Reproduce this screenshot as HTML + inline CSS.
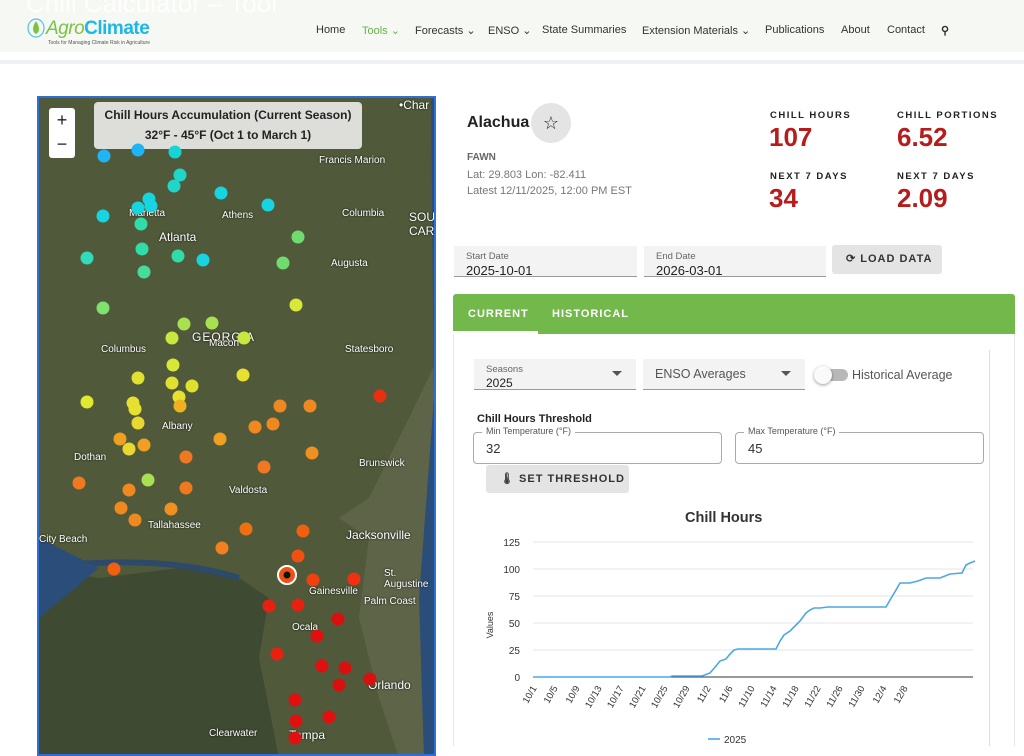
<!DOCTYPE html>
<html><head><meta charset="utf-8">
<style>
*{box-sizing:border-box;margin:0;padding:0}
body{width:1024px;height:746px;overflow:hidden;background:#fff;font-family:"Liberation Sans",sans-serif;color:#333;position:relative}
.hdr{position:absolute;left:0;top:0;width:1024px;height:52px;background:#f6f8f3}
.ghost{position:absolute;left:26px;top:-12px;font-size:26px;color:#fff;opacity:.9}
.nav{position:absolute;top:24px;font-size:11px;color:#333}
.sep{position:absolute;top:60px;left:0;width:1024px;height:4px;background:#f0f1f3}
.map{position:absolute;left:37px;top:96px;width:399px;height:660px;background:#4a5236;border:2px solid #2f6fd6;overflow:hidden}
.dot{position:absolute;width:13px;height:13px;border-radius:50%}
.lbl{position:absolute;color:#fff;font-size:10px;text-shadow:0 0 2px #000}
.red{color:#b71c1c;font-weight:bold;font-size:26px;position:absolute}
.cap{position:absolute;font-size:9.5px;letter-spacing:1.5px;font-weight:bold;color:#222}
.fld{position:absolute;background:#f3f3f3;border-bottom:1px solid #999}
.fld .s{position:absolute;left:12px;top:5px;font-size:9.5px;color:#666}
.fld .v{position:absolute;left:12px;top:17px;font-size:13px;color:#222}
.btn{position:absolute;background:#e4e4e4;border-radius:3px;font-size:11px;font-weight:bold;letter-spacing:1px;color:#333}
</style></head><body>
<div class="hdr"></div>
<div class="ghost">Chill Calculator – Tool</div>
<svg style="position:absolute;left:27px;top:17px" width="18" height="22"><ellipse cx="9" cy="11" rx="8" ry="9" fill="none" stroke="#4fc3e8" stroke-width="1.2"/><path d="M9 4 C5 10 5 15 9 17 C13 15 13 10 9 4Z" fill="#7cc242"/></svg>
<div style="position:absolute;left:46px;top:18px;font-size:19px;font-style:italic;color:#7cc242;letter-spacing:-0.5px">Agro<span style="color:#1fb7e6;font-style:normal;font-weight:bold">Climate</span></div>
<div style="position:absolute;left:48px;top:40px;font-size:5px;color:#555">Tools for Managing Climate Risk in Agriculture</div>
<div class="nav" style="left:316px">Home</div>
<div class="nav" style="left:362px;color:#6ab04c">Tools ⌄</div>
<div class="nav" style="left:415px">Forecasts ⌄</div>
<div class="nav" style="left:488px">ENSO ⌄</div>
<div class="nav" style="left:542px">State Summaries</div>
<div class="nav" style="left:642px">Extension Materials ⌄</div>
<div class="nav" style="left:765px">Publications</div>
<div class="nav" style="left:841px">About</div>
<div class="nav" style="left:887px">Contact</div>
<div class="nav" style="left:941px;font-weight:bold">⚲</div>
<div class="sep"></div>

<div class="map">
<svg width="399" height="660" style="position:absolute;left:0;top:0">
<rect width="399" height="660" fill="#505a3a"/>
<path d="M300 420 L330 440 L320 520 L340 600 L360 660 L399 660 L399 260 L370 320 L330 400Z" fill="#5e6448"/>
<path d="M0 470 L60 480 L140 470 L200 480 L230 500 L220 560 L240 660 L0 660Z" fill="#3f4a33"/>
<path d="M0 470 Q120 455 200 480" stroke="#2d4a6a" stroke-width="6" fill="none"/>
<path d="M392 0 L399 0 L399 660 L385 660 L380 500 L395 300Z" fill="#2b4d7a"/>
<path d="M0 440 L60 470 L0 520Z" fill="#2b4d7a"/>
</svg>
<div style="position:absolute;left:10px;top:10px;width:26px;height:50px;background:#fff;border-radius:3px;font-size:18px;text-align:center;line-height:24px;color:#222">+<br>−</div>
<div style="position:absolute;left:55px;top:4px;width:268px;height:47px;background:rgba(240,240,240,.88);border-radius:4px;text-align:center;font-size:12px;font-weight:bold;color:#222;line-height:20px;padding-top:3px">Chill Hours Accumulation (Current Season)<br>32°F - 45°F (Oct 1 to March 1)</div>
<div class="lbl" style="left:120px;top:132px;font-size:12px">Atlanta</div>
<div class="lbl" style="left:90px;top:110px">Marietta</div>
<div class="lbl" style="left:183px;top:112px">Athens</div>
<div class="lbl" style="left:153px;top:232px;font-size:12px;letter-spacing:1px">GEORGIA</div>
<div class="lbl" style="left:62px;top:246px">Columbus</div>
<div class="lbl" style="left:170px;top:240px">Macon</div>
<div class="lbl" style="left:292px;top:160px">Augusta</div>
<div class="lbl" style="left:303px;top:110px">Columbia</div>
<div class="lbl" style="left:123px;top:323px">Albany</div>
<div class="lbl" style="left:35px;top:354px">Dothan</div>
<div class="lbl" style="left:190px;top:387px">Valdosta</div>
<div class="lbl" style="left:109px;top:422px">Tallahassee</div>
<div class="lbl" style="left:307px;top:430px;font-size:12px">Jacksonville</div>
<div class="lbl" style="left:270px;top:488px">Gainesville</div>
<div class="lbl" style="left:253px;top:524px">Ocala</div>
<div class="lbl" style="left:329px;top:580px;font-size:12px">Orlando</div>
<div class="lbl" style="left:170px;top:630px">Clearwater</div>
<div class="lbl" style="left:250px;top:630px;font-size:12px">Tampa</div>
<div class="lbl" style="left:306px;top:246px">Statesboro</div>
<div class="lbl" style="left:320px;top:360px">Brunswick</div>
<div class="lbl" style="left:280px;top:57px">Francis Marion</div>
<div class="lbl" style="left:360px;top:0px;font-size:12px">•Char</div>
<div class="lbl" style="left:370px;top:112px;font-size:12px">SOU<br>CARO</div>
<div class="lbl" style="left:0px;top:436px">City Beach</div>
<div class="lbl" style="left:325px;top:498px">Palm Coast</div>
<div class="lbl" style="left:345px;top:470px">St. Augustine</div>
</div>
<svg style="position:absolute;left:37px;top:96px" width="399" height="650">
<g>
<circle cx="67" cy="60" r="6.5" fill="#1eb4f5"/><circle cx="101" cy="54" r="6.5" fill="#1eb4f5"/><circle cx="138" cy="56" r="6.5" fill="#16d4d4"/>
<circle cx="143" cy="79" r="6.5" fill="#20d6c8"/><circle cx="137" cy="90" r="6.5" fill="#20d6c8"/><circle cx="112" cy="103" r="6.5" fill="#16d4e0"/><circle cx="114" cy="110" r="6.5" fill="#16d4e0"/><circle cx="101" cy="112" r="6.5" fill="#16d4e0"/>
<circle cx="66" cy="120" r="6.5" fill="#16d4e0"/><circle cx="184" cy="97" r="6.5" fill="#16d4e0"/><circle cx="231" cy="109" r="6.5" fill="#16d4e0"/>
<circle cx="104" cy="128" r="6.5" fill="#30dca8"/><circle cx="105" cy="153" r="6.5" fill="#30dca8"/><circle cx="50" cy="162" r="6.5" fill="#30dcb8"/><circle cx="107" cy="176" r="6.5" fill="#48dc9a"/><circle cx="141" cy="160" r="6.5" fill="#30dca8"/><circle cx="166" cy="164" r="6.5" fill="#16d4e0"/><circle cx="246" cy="167" r="6.5" fill="#70dc70"/><circle cx="261" cy="141" r="6.5" fill="#70dc70"/>
<circle cx="66" cy="212" r="6.5" fill="#80e070"/><circle cx="147" cy="228" r="6.5" fill="#a8e050"/><circle cx="175" cy="227" r="6.5" fill="#a8e050"/><circle cx="207" cy="242" r="6.5" fill="#c8e840"/><circle cx="259" cy="209" r="6.5" fill="#d8e838"/><circle cx="135" cy="242" r="6.5" fill="#c8e840"/>
<circle cx="136" cy="269" r="6.5" fill="#d8e838"/><circle cx="101" cy="282" r="6.5" fill="#e0e030"/><circle cx="135" cy="287" r="6.5" fill="#e0e030"/><circle cx="155" cy="290" r="6.5" fill="#e0e030"/><circle cx="206" cy="279" r="6.5" fill="#e8e030"/><circle cx="142" cy="301" r="6.5" fill="#e8e030"/><circle cx="96" cy="307" r="6.5" fill="#e8e030"/><circle cx="50" cy="306" r="6.5" fill="#e0e830"/><circle cx="98" cy="313" r="6.5" fill="#e8e030"/><circle cx="101" cy="327" r="6.5" fill="#e8d830"/><circle cx="143" cy="310" r="6.5" fill="#f0b020"/>
<circle cx="243" cy="310" r="6.5" fill="#f08820"/><circle cx="273" cy="310" r="6.5" fill="#f08820"/><circle cx="218" cy="331" r="6.5" fill="#f08820"/><circle cx="236" cy="328" r="6.5" fill="#f08820"/><circle cx="183" cy="343" r="6.5" fill="#f0a020"/><circle cx="83" cy="343" r="6.5" fill="#f0a020"/><circle cx="107" cy="349" r="6.5" fill="#f0a020"/><circle cx="92" cy="353" r="6.5" fill="#e8d830"/><circle cx="149" cy="361" r="6.5" fill="#f07820"/><circle cx="275" cy="357" r="6.5" fill="#f09020"/><circle cx="227" cy="371" r="6.5" fill="#f07820"/><circle cx="343" cy="300" r="6.5" fill="#e83010"/>
<circle cx="42" cy="387" r="6.5" fill="#f07820"/><circle cx="111" cy="384" r="6.5" fill="#a8e050"/><circle cx="92" cy="394" r="6.5" fill="#f08820"/><circle cx="149" cy="392" r="6.5" fill="#f07820"/><circle cx="84" cy="412" r="6.5" fill="#f08820"/><circle cx="134" cy="413" r="6.5" fill="#f09020"/><circle cx="98" cy="424" r="6.5" fill="#f08820"/><circle cx="209" cy="433" r="6.5" fill="#f07010"/><circle cx="266" cy="435" r="6.5" fill="#f06010"/><circle cx="185" cy="452" r="6.5" fill="#f08020"/><circle cx="77" cy="473" r="6.5" fill="#f06010"/>
<circle cx="261" cy="460" r="6.5" fill="#f05010"/><circle cx="276" cy="484" r="6.5" fill="#f04010"/><circle cx="317" cy="483" r="6.5" fill="#f03010"/><circle cx="232" cy="510" r="6.5" fill="#e82010"/><circle cx="261" cy="509" r="6.5" fill="#e82010"/><circle cx="280" cy="540" r="6.5" fill="#e01010"/><circle cx="301" cy="523" r="6.5" fill="#d81010"/><circle cx="240" cy="558" r="6.5" fill="#e82010"/><circle cx="308" cy="572" r="6.5" fill="#d81010"/><circle cx="285" cy="570" r="6.5" fill="#e01010"/><circle cx="302" cy="589" r="6.5" fill="#d81010"/><circle cx="258" cy="604" r="6.5" fill="#e01010"/><circle cx="292" cy="621" r="6.5" fill="#e01010"/><circle cx="259" cy="625" r="6.5" fill="#e01010"/><circle cx="258" cy="642" r="6.5" fill="#e01010"/><circle cx="333" cy="583" r="6.5" fill="#d81010"/>
<circle cx="250" cy="479" r="9" fill="#f05010" stroke="#fff" stroke-width="2"/><circle cx="250" cy="479" r="3.5" fill="#111"/>
</g></svg>

<div style="position:absolute;left:467px;top:114px;font-size:16px;font-weight:bold;color:#222">Alachua</div>
<div style="position:absolute;left:531px;top:103px;width:40px;height:40px;border-radius:50%;background:#e4e4e4;text-align:center;line-height:40px;font-size:18px;color:#222">☆</div>
<div style="position:absolute;left:467px;top:152px;font-size:10px;font-weight:bold;color:#666">FAWN</div>
<div style="position:absolute;left:467px;top:167px;font-size:11px;color:#777;line-height:16px">Lat: 29.803 Lon: -82.411<br>Latest 12/11/2025, 12:00 PM EST</div>
<div class="cap" style="left:770px;top:110px">CHILL HOURS</div>
<div class="red" style="left:769px;top:122px">107</div>
<div class="cap" style="left:897px;top:110px">CHILL PORTIONS</div>
<div class="red" style="left:897px;top:122px">6.52</div>
<div class="cap" style="left:770px;top:171px">NEXT 7 DAYS</div>
<div class="red" style="left:769px;top:183px">34</div>
<div class="cap" style="left:897px;top:171px">NEXT 7 DAYS</div>
<div class="red" style="left:897px;top:183px">2.09</div>

<div class="fld" style="left:454px;top:246px;width:183px;height:31px"><div class="s">Start Date</div><div class="v">2025-10-01</div></div>
<div class="fld" style="left:644px;top:246px;width:182px;height:31px"><div class="s">End Date</div><div class="v">2026-03-01</div></div>
<div class="btn" style="left:832px;top:245px;width:110px;height:29px;line-height:29px;padding-left:14px">⟳ LOAD DATA</div>

<div style="position:absolute;left:453px;top:294px;width:562px;height:40px;background:#72b84a;border-radius:3px 3px 0 0"></div>
<div style="position:absolute;left:468px;top:308px;font-size:11px;font-weight:bold;color:#fff;letter-spacing:1px">CURRENT</div>
<div style="position:absolute;left:453px;top:331px;width:85px;height:3px;background:#fff"></div>
<div style="position:absolute;left:552px;top:308px;font-size:11px;font-weight:bold;color:#fff;letter-spacing:1px">HISTORICAL</div>
<div style="position:absolute;left:453px;top:334px;width:562px;height:412px;border-left:1px solid #e6e6e6;border-right:1px solid #e6e6e6"></div>
<div style="position:absolute;left:989px;top:350px;width:1px;height:396px;background:#ddd"></div>

<div class="fld" style="left:474px;top:359px;width:162px;height:31px"><div class="s">Seasons</div><div class="v" style="font-size:12px">2025</div><div style="position:absolute;right:14px;top:12px;border:5px solid transparent;border-top-color:#555"></div></div>
<div class="fld" style="left:643px;top:359px;width:162px;height:31px"><div class="v" style="top:8px;color:#555;font-size:12.5px">ENSO Averages</div><div style="position:absolute;right:14px;top:12px;border:5px solid transparent;border-top-color:#555"></div></div>
<div style="position:absolute;left:818px;top:369px;width:30px;height:12px;border-radius:6px;background:#b8b8b8"></div>
<div style="position:absolute;left:814px;top:366px;width:18px;height:18px;border-radius:50%;background:#fafafa;box-shadow:0 1px 3px rgba(0,0,0,.4)"></div>
<div style="position:absolute;left:852px;top:368px;font-size:12.5px;color:#555">Historical Average</div>

<div style="position:absolute;left:477px;top:413px;font-size:11px;font-weight:bold;color:#222">Chill Hours Threshold</div>
<div style="position:absolute;left:473px;top:432px;width:249px;height:32px;border:1px solid #aaa;border-radius:4px"><div style="position:absolute;left:8px;top:-7px;background:#fff;padding:0 4px;font-size:9px;color:#555">Min Temperature (°F)</div><div style="position:absolute;left:12px;top:8px;font-size:13px">32</div></div>
<div style="position:absolute;left:735px;top:432px;width:249px;height:32px;border:1px solid #aaa;border-radius:4px"><div style="position:absolute;left:8px;top:-7px;background:#fff;padding:0 4px;font-size:9px;color:#555">Max Temperature (°F)</div><div style="position:absolute;left:12px;top:8px;font-size:13px">45</div></div>
<div class="btn" style="left:486px;top:465px;width:143px;height:28px;line-height:28px;padding-left:14px">🌡 SET THRESHOLD</div>

<div style="position:absolute;left:685px;top:510px;font-size:14.5px;font-weight:bold;color:#333">Chill Hours</div>
<svg style="position:absolute;left:470px;top:530px" width="520" height="216" font-family="Liberation Sans" font-size="10" fill="#333">
<g stroke="#e6e6e6"><line x1="63" x2="503" y1="12" y2="12"/><line x1="63" x2="503" y1="39" y2="39"/><line x1="63" x2="503" y1="66" y2="66"/><line x1="63" x2="503" y1="93" y2="93"/><line x1="63" x2="503" y1="120" y2="120"/></g>
<line x1="63" x2="503" y1="147" y2="147" stroke="#333"/>
<g text-anchor="end"><text x="50" y="16">125</text><text x="50" y="43">100</text><text x="50" y="70">75</text><text x="50" y="97">50</text><text x="50" y="124">25</text><text x="50" y="151">0</text></g>
<text transform="translate(23,95) rotate(-90)" font-size="9" text-anchor="middle">Values</text>
<g text-anchor="end" font-size="9.5">
<text transform="translate(67,158) rotate(-60)">10/1</text><text transform="translate(88,158) rotate(-60)">10/5</text><text transform="translate(110,158) rotate(-60)">10/9</text><text transform="translate(132,158) rotate(-60)">10/13</text><text transform="translate(154,158) rotate(-60)">10/17</text><text transform="translate(176,158) rotate(-60)">10/21</text><text transform="translate(198,158) rotate(-60)">10/25</text><text transform="translate(220,158) rotate(-60)">10/29</text><text transform="translate(241,158) rotate(-60)">11/2</text><text transform="translate(263,158) rotate(-60)">11/6</text><text transform="translate(285,158) rotate(-60)">11/10</text><text transform="translate(307,158) rotate(-60)">11/14</text><text transform="translate(329,158) rotate(-60)">11/18</text><text transform="translate(351,158) rotate(-60)">11/22</text><text transform="translate(373,158) rotate(-60)">11/26</text><text transform="translate(395,158) rotate(-60)">11/30</text><text transform="translate(417,158) rotate(-60)">12/4</text><text transform="translate(438,158) rotate(-60)">12/8</text>
</g>
<polyline fill="none" stroke="#4aa8e8" stroke-width="1.6" points="63,147 200,147 202,146 232,146 240,143 246,136 250,131 256,129 260,124 264,120 268,119 306,119 310,111 314,105 320,101 324,97 330,91 336,83 340,80 344,78 350,78 358,77 416,77 420,70 426,60 430,53 440,53 448,51 456,48 470,48 480,44 492,43 496,35 500,33 505,31"/>
<line x1="238" x2="250" y1="209" y2="209" stroke="#4aa8e8" stroke-width="1.6"/>
<text x="254" y="213" font-size="10">2025</text>
</svg>
</body></html>
